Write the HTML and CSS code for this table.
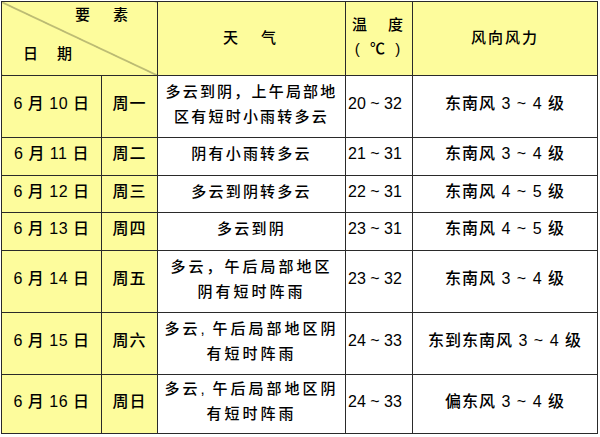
FILE: index.html
```html
<!DOCTYPE html>
<html lang="zh-CN">
<head>
<meta charset="utf-8">
<link rel="stylesheet" href="styles.css">
</head>
<body>
<table class="weather">
  <colgroup>
    <col class="c-date"><col class="c-week"><col class="c-desc"><col class="c-temp"><col class="c-wind">
  </colgroup>
  <tr class="r-head">
    <td colspan="2" class="corner">
      <div class="corner-box">
        <span class="k-top">要　素</span>
        <span class="k-bot">日　期</span>
      </div>
    </td>
    <td class="head sky">天　气</td>
    <td class="head temp-head">温　度<br>( ℃ )</td>
    <td class="head">风向风力</td>
  </tr>
  <tr class="r-tall">
    <td class="y date">6 月 10 日</td><td class="y wk">周一</td>
    <td class="desc">多云到阴，上午局部地<br>区有短时小雨转多云</td>
    <td class="temp">20 ~ 32</td><td class="wind">东南风 3 ~ 4 级</td>
  </tr>
  <tr class="r-s1">
    <td class="y date">6 月 11 日</td><td class="y wk">周二</td>
    <td class="desc">阴有小雨转多云</td>
    <td class="temp">21 ~ 31</td><td class="wind">东南风 3 ~ 4 级</td>
  </tr>
  <tr class="r-s2">
    <td class="y date">6 月 12 日</td><td class="y wk">周三</td>
    <td class="desc">多云到阴转多云</td>
    <td class="temp">22 ~ 31</td><td class="wind">东南风 4 ~ 5 级</td>
  </tr>
  <tr class="r-s1">
    <td class="y date">6 月 13 日</td><td class="y wk">周四</td>
    <td class="desc">多云到阴</td>
    <td class="temp">23 ~ 31</td><td class="wind">东南风 4 ~ 5 级</td>
  </tr>
  <tr class="r-tall">
    <td class="y date">6 月 14 日</td><td class="y wk">周五</td>
    <td class="desc wide">多云，午后局部地区<br>阴有短时阵雨</td>
    <td class="temp">23 ~ 32</td><td class="wind">东南风 3 ~ 4 级</td>
  </tr>
  <tr class="r-tall">
    <td class="y date">6 月 15 日</td><td class="y wk">周六</td>
    <td class="desc wide">多云<span class="cm">,</span>午后局部地区阴<br>有短时阵雨</td>
    <td class="temp">24 ~ 33</td><td class="wind">东到东南风 3 ~ 4 级</td>
  </tr>
  <tr class="r-last">
    <td class="y date">6 月 16 日</td><td class="y wk">周日</td>
    <td class="desc wide">多云<span class="cm">,</span>午后局部地区阴<br>有短时阵雨</td>
    <td class="temp">24 ~ 33</td><td class="wind">偏东风 3 ~ 4 级</td>
  </tr>
</table>
</body>
</html>
```

FILE: styles.css
```css
html, body {
  margin: 0;
  padding: 0;
  background: #ffffff;
}
body {
  padding: 1px 0 0 1px;
  font-family: "Liberation Sans", "Noto Sans CJK SC", sans-serif;
  color: #000;
}
.weather {
  border-collapse: collapse;
  table-layout: fixed;
  width: 597px;
}
.weather td {
  border: 1px solid #2a2a2a;
  padding: 0 0 6px 0;
  text-align: center;
  vertical-align: middle;
  font-size: 15px;
  font-weight: 500;
  line-height: 25px;
  letter-spacing: 2px;
  background: #ffffff;
}
.c-date { width: 100px; }
.c-week { width: 56px; }
.c-desc { width: 188px; }
.c-temp { width: 67px; }
.c-wind { width: 185px; }

.r-head td { height: 70px; padding-bottom: 3px; background: #fdfc9c; }
.r-tall td { height: 55px; }
.r-s1 td { height: 31px; }
.r-s2 td { height: 30px; }
.r-last td { height: 52px; }

.weather td.y { background: #fdfc9c; }
.weather td.sky { letter-spacing: 4px; }
.weather td.temp-head { line-height: 24px; letter-spacing: 3px; }

.weather td.corner {
  height: 73px;
  padding: 0;
  background-color: #fdfc9c;
  background-image: linear-gradient(to top right, transparent calc(50% - 0.8px), #6a6a40 50%, transparent calc(50% + 0.8px));
  vertical-align: top;
}
.corner-box {
  display: flex;
  flex-direction: column;
  height: 73px;
}
.k-top {
  align-self: flex-end;
  margin: 1px 25px 0 0;
  line-height: 24px;
  letter-spacing: 4px;
}
.k-bot {
  align-self: flex-start;
  margin: 15px 0 0 21px;
  line-height: 24px;
}
.weather td.date { font-size: 16px; letter-spacing: 0.5px; }
.weather td.wk { font-size: 16px; letter-spacing: 1px; }
.weather td.desc { letter-spacing: 2.2px; }
.weather td.desc.wide { letter-spacing: 3px; }
.cm {
  display: inline-block;
  width: 12px;
  text-align: left;
  letter-spacing: 0;
}
.weather td.temp {
  text-align: left;
  padding-left: 2px;
  font-size: 16px;
  letter-spacing: 0;
}
.weather td.wind { font-size: 16px; letter-spacing: 1px; }
```
